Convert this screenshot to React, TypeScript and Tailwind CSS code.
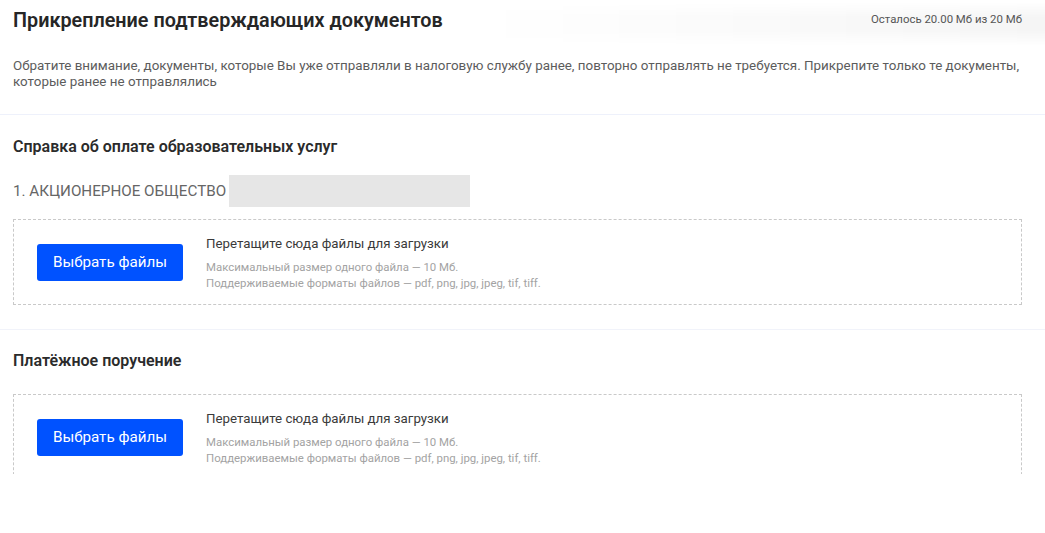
const uploadHint = [
  "Максимальный размер одного файла — 10 Мб.",
  "Поддерживаемые форматы файлов — pdf, png, jpg, jpeg, tif, tiff.",
];

function Dropzone() {
  return (
    <div className="flex h-[86px] shrink-0 items-center gap-[23px] border border-dashed border-[#c9c9c9] px-[23px]">
      <button
        type="button"
        className="h-[37px] w-[146px] rounded-[3px] bg-[#0052ff] text-[15.2px] text-white"
      >
        Выбрать файлы
      </button>
      <div className="flex flex-col">
        <div className="text-[13.3px] leading-[20px] text-[#3a3a3a]">
          Перетащите сюда файлы для загрузки
        </div>
        <div className="mt-[5px] text-[11.4px] leading-[16px] text-[#a3a3a3]">
          {uploadHint.map((line) => (
            <div key={line}>{line}</div>
          ))}
        </div>
      </div>
    </div>
  );
}

export default function App() {
  return (
    <div className="h-[474px] w-[1045px] overflow-hidden bg-white font-['Roboto',sans-serif]">
      <div className="px-[13px] pr-[23px]">
        {/* soft grey glow behind the header row, fading to the left and at top/bottom */}
        <div className="relative -mr-[23px] mt-[2px] flex h-[44px] items-start justify-between pr-[23px] pt-[7px] before:absolute before:inset-0 before:bg-[linear-gradient(to_right,rgba(0,0,0,0)_45%,rgba(0,0,0,0.04))] before:content-[''] before:[mask-image:linear-gradient(to_bottom,transparent,black_35%,black_65%,transparent)]">
          <h1 className="relative text-[19.8px] font-semibold leading-[24px] text-[#262626]">
            Прикрепление подтверждающих документов
          </h1>
          <span className="relative mt-[2px] text-[11.4px] leading-[16px] text-[#555]">
            Осталось 20.00 Мб из 20 Мб
          </span>
        </div>
        <p className="mt-[12px] pb-[24px] text-[13.4px] leading-[16px] text-[#5c5c5c]">
          Обратите внимание, документы, которые Вы уже отправляли в налоговую службу ранее, повторно
          отправлять не требуется. Прикрепите только те документы, которые ранее не отправлялись
        </p>
      </div>

      <section className="flex flex-col border-t-[1.5px] border-[#eef1fb] px-[13px] pb-[24px] pr-[23px] pt-[22px]">
        <h2 className="text-[16px] font-semibold leading-[20px] text-[#2b2b2b]">
          Справка об оплате образовательных услуг
        </h2>
        <div className="mt-[18px] flex h-[32px] items-center text-[15.2px] text-[#666]">
          <span>1. АКЦИОНЕРНОЕ ОБЩЕСТВО</span>
          <span className="ml-[3px] h-[32px] w-[241px] bg-[#e6e6e6]" />
        </div>
        <div className="mt-[12px]">
          <Dropzone />
        </div>
      </section>

      <section className="flex flex-col border-t-[1.5px] border-[#f1f3fa] px-[13px] pr-[23px] pt-[21px]">
        <h2 className="text-[16px] font-semibold leading-[20px] text-[#2b2b2b]">
          Платёжное поручение
        </h2>
        <div className="mt-[23px]">
          <Dropzone />
        </div>
      </section>
    </div>
  );
}
